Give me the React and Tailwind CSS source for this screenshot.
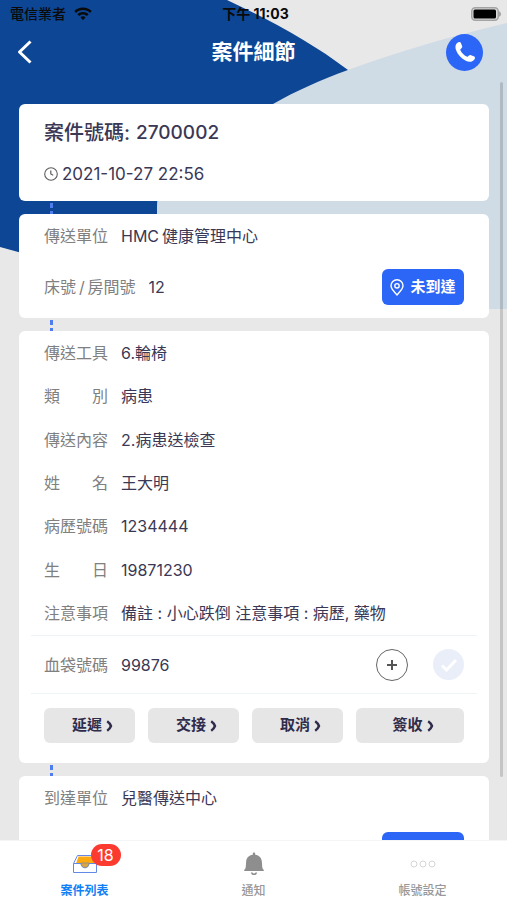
import * as React from 'react';
import clsx from 'clsx';

const DETAILS = [
	{ label: '傳送工具', value: '6.輪椅' },
	{ label: '類別', value: '病患' },
	{ label: '傳送內容', value: '2.病患送檢查' },
	{ label: '姓名', value: '王大明' },
	{ label: '病歷號碼', value: '1234444' },
	{ label: '生日', value: '19871230' },
	{ label: '注意事項', value: '備註 : 小心跌倒 注意事項 : 病歷, 藥物' },
];

const ACTIONS = [
	{ name: '延遲', slug: 'delay' },
	{ name: '交接', slug: 'handover' },
	{ name: '取消', slug: 'cancel' },
	{ name: '簽收', slug: 'sign', wide: true },
];

/**
 * icons
 */
const WifiIcon = () => (
	<svg viewBox='0 0 18 14' className='w-[18px] h-[14px]' fill='currentColor' aria-hidden='true'>
		<path d='M9 0.6C5.6 0.6 2.5 1.9 0.3 4.1L2.1 5.9C3.9 4.1 6.3 3.1 9 3.1s5.1 1 6.9 2.8l1.8-1.8C15.5 1.9 12.4 0.6 9 0.6Z' />
		<path d='M9 4.9c-2.2 0-4.2.9-5.6 2.3l1.8 1.8C6.2 8 7.5 7.4 9 7.4s2.8.6 3.8 1.6l1.8-1.8C13.2 5.8 11.2 4.9 9 4.9Z' />
		<path d='M9 9.200c-1 0-1.900.4-2.500 1L9 13.200l2.500-3c-.6-.6-1.500-1-2.500-1Z' />
	</svg>
);

const BatteryIcon = () => (
	<svg viewBox='0 0 30 14' className='w-[30px] h-[14px]' aria-hidden='true'>
		<rect x='0.75' y='0.75' width='26.5' height='12.5' rx='3.5' fill='#dcdcdc' stroke='#a3a3a3' strokeWidth='1.5' />
		<rect x='2.5' y='2.5' width='22.5' height='9' rx='1.5' fill='#000' />
		<path d='M28 4.200c1.400.6 2 1.500 2 2.800s-.6 2.200-2 2.800Z' fill='#a3a3a3' />
	</svg>
);

const PhoneIcon = () => (
	<svg viewBox='0 0 22 22' className='w-[22px] h-[22px]' fill='#fff' aria-hidden='true'>
		<path d='M2 3.500C2.800 2 4 1 5.300 1c.9 0 1.500.6 1.800 1.400l1 2.700c.3.900 0 1.500-.6 2.100l-.9.900c-.4.400-.4.800-.1 1.400 1.500 2.800 3.500 4.800 6.200 6.100.5.200.9.200 1.300-.2l.9-.8c.6-.5 1.300-.7 2.100-.4l2.700 1c.9.3 1.400 1 1.300 1.900-.2 1.500-1.400 2.700-3.200 3.300-2 .7-4.200.2-6.500-1-4.300-2.200-7.700-5.900-9.300-10.400C1.300 6.700 1.200 5 2 3.500Z' />
	</svg>
);

const ClockIcon = () => (
	<svg viewBox='0 0 14 14' className='w-[14px] h-[14px]' fill='none' stroke='#5c5c5c' aria-hidden='true'>
		<circle cx='7' cy='7' r='6.3' strokeWidth='1.1' />
		<path d='M6.800 3.400V7l2.400 1.300' strokeWidth='1.2' />
	</svg>
);

const PinIcon = () => (
	<svg viewBox='0 0 14 17' className='w-[14px] h-[17px]' fill='none' stroke='currentColor' strokeWidth='1.4' aria-hidden='true'>
		<path d='M7 16C4.200 12.800 1 10 1 6.800a6 6 0 0 1 12 0C13 10 9.800 12.800 7 16Z' strokeLinejoin='round' />
		<circle cx='7' cy='6.8' r='2.2' />
	</svg>
);

const ChevronIcon = () => (
	<svg viewBox='0 0 7 12' className='w-[7px] h-3' fill='none' stroke='currentColor' strokeWidth='2.4' aria-hidden='true'>
		<path d='M1.200 1.300C2.600 2.300 4.400 4.300 5 6 4.400 7.700 2.600 9.700 1.200 10.700' />
	</svg>
);

const InboxIcon = () => (
	<svg viewBox='0 0 24 20' className='w-6 h-5' aria-hidden='true'>
		<path d='M4.500 1.500h15L23.500 9.500V18.500H.5V9.500Z' fill='#fff' stroke='#6488e6' />
		<path d='M5.500 2.500h13.500L21.500 9.500H3Z' fill='#fcaa10' />
		<path d='M.5 9.500H8c.2 2.700 1.700 4.300 4 4.300s3.800-1.600 4-4.300h7.500' fill='none' stroke='#6488e6' />
		<path d='M8 9h8c-.2 2.900-1.700 4.500-4 4.500S8.200 11.900 8 9Z' fill='#dba544' stroke='#7d8597' strokeWidth='0.7' />
	</svg>
);

const BellIcon = () => (
	<svg viewBox='0 0 22 24' className='w-[22px] h-6' fill='#8e8e8e' aria-hidden='true'>
		<path d='M11 .5c.7 0 1.200.5 1.200 1.200v1C16.200 3.200 18.700 6 18.900 9.900l.3 4.600c.1 1.500.6 2.600 1.600 3.500v1H1.200v-1c1-.9 1.500-2 1.600-3.500l.3-4.600C3.300 6 5.800 3.200 9.800 2.700v-1C9.800 1 10.300.5 11 .5Z' />
		<path d='M7.800 20.500h1.700c.3.600.8.900 1.500.9s1.200-.3 1.500-.9h1.700c-.4 1.600-1.500 2.600-3.200 2.600s-2.800-1-3.200-2.600Z' />
	</svg>
);

const MoreIcon = () => (
	<svg viewBox='0 0 26 8' className='w-[26px] h-2' fill='none' stroke='#d6d6d6' aria-hidden='true'>
		<circle cx='4' cy='4' r='3' />
		<circle cx='13' cy='4' r='3' />
		<circle cx='22' cy='4' r='3' />
	</svg>
);

const TABS = [
	{ name: '案件列表', slug: 'cases', icon: InboxIcon, badge: 18, active: true },
	{ name: '通知', slug: 'notices', icon: BellIcon },
	{ name: '帳號設定', slug: 'account', icon: MoreIcon },
];

/**
 * shared parts
 */
const Backdrop = () => (
	<svg
		viewBox='0 0 507 310'
		preserveAspectRatio='none'
		className='absolute inset-x-0 top-0 -z-10 w-full h-[310px]'
		aria-hidden='true'
	>
		<path d='M0 0H227C270 20 311 42 348 70L273 160 157 290 0 247Z' fill='#0d4694' />
		<path d='M507 23C452 36 400 51 348 70 320 80 296 91 273 104 200 135 157 170 157 206V309H507Z' fill='#cfdbe5' />
	</svg>
);

const Card = ({ className, children }) => (
	<section className={clsx('rounded-md bg-white', className)}>{children}</section>
);

const Connector = () => (
	<div className='flex h-[13px] flex-col gap-[3px] pl-[31px] pt-[2px]'>
		<span className='h-[5px] w-[3px] bg-[#4f7df0]'></span>
		<span className='h-[3px] w-[3px] bg-[#4f7df0]'></span>
	</div>
);

// two character labels are spread over the width of four
const Field = ({ label, value }) => (
	<div className='flex items-center gap-[13px]'>
		<dt className='flex min-w-16 justify-between text-[#808080]'>
			{label.length === 2
				? label.split('').map(char => <span key={char}>{char}</span>)
				: label}
		</dt>
		<dd>{value}</dd>
	</div>
);

const ArriveButton = () => (
	<button
		type='button'
		className='flex h-9 w-[82px] items-center justify-center gap-[6px] rounded-md bg-[#2c66f6] text-[15px] font-bold text-white'
	>
		<PinIcon /> 未到達
	</button>
);

const Header = () => (
	<header>
		<div className='grid h-7 grid-cols-3 items-center pl-[10px] pr-[6px] text-sm text-[#0a0a0a]'>
			<div className='flex items-center gap-2 font-medium'>電信業者 <WifiIcon /></div>
			<div className='text-center font-bold'>下午 11:03</div>
			<div className='flex justify-end'><BatteryIcon /></div>
		</div>
		<div className='flex h-12 items-center px-4 text-white'>
			<div className='flex flex-1'>
				<button type='button' aria-label='返回' className='flex h-9 w-5 items-center'>
					<svg viewBox='0 0 16 24' className='w-4 h-6' fill='none' stroke='currentColor' strokeWidth='3' aria-hidden='true'>
						<path d='M14.500 1.500 3.500 12l11 10.500' strokeLinejoin='round' />
					</svg>
				</button>
			</div>
			<h1 className='text-center text-[21px] font-bold'>案件細節</h1>
			<div className='flex flex-1 justify-end'>
				<button
					type='button'
					aria-label='撥打電話'
					className='mr-2 flex h-[37px] w-[37px] items-center justify-center rounded-full bg-[#2c66f6]'
				>
					<PhoneIcon />
				</button>
			</div>
		</div>
	</header>
);

const TabBar = () => (
	<nav className='grid h-[60px] grid-cols-3 border-t border-[#f3f5f7] bg-white text-xs'>
		{TABS.map(({ name, slug, icon: Icon, badge, active }) => (
			<a
				key={slug}
				href={'#' + slug}
				className={clsx(
					'flex flex-col items-center gap-[6px] pt-[10px]',
					active ? 'font-bold text-[#0f80f5]' : 'font-medium text-[#989898]'
				)}
			>
				<span className='relative flex h-[26px] items-center'>
					<Icon />
					{badge &&
						<span className='absolute -top-[7px] left-[18px] flex h-[22px] w-[30px] items-center justify-center rounded-full bg-[#fb3b30] text-base font-normal text-white'>
							{badge}
						</span>
					}
				</span>
				{name}
			</a>
		))}
	</nav>
);

export default function App() {
	return (
		<div className="relative isolate flex h-screen flex-col overflow-hidden bg-[#e8e8e8] font-['Inter','Noto_Sans_CJK_TC',sans-serif] text-base text-[#3a3855]">
			<Backdrop />
			<Header />
			<div className='relative flex min-h-0 flex-1 flex-col'>
				<main className='flex-1 overflow-y-auto pb-5 pl-[19px] pr-[18px] pt-7 [scrollbar-width:none]'>
					<Card className='px-[25px] pb-[14px] pt-[14px]'>
						<h2 className='flex h-[30px] items-center gap-[6px] text-xl font-medium'>
							案件號碼: <span className='text-[19px]'>2700002</span>
						</h2>
						<p className='mt-[13px] flex items-center gap-1 text-[17px] leading-[26px]'>
							<ClockIcon /> <time>2021-10-27 22:56</time>
						</p>
					</Card>
					<Connector />
					<Card className='px-[25px] pb-[13px]'>
						<dl>
							<div className='flex h-11'><Field label='傳送單位' value={'HMC\u2009健康管理中心'} /></div>
							<div className='flex items-center justify-between pt-[11px]'>
								<Field label={'床號\u2009/\u2009房間號'} value='12' />
								<ArriveButton />
							</div>
						</dl>
					</Card>
					<Connector />
					<Card className='px-3 pb-5'>
						<dl className='grid min-h-[304px] auto-rows-fr px-[13px]'>
							{DETAILS.map(item => <Field key={item.label} {...item} />)}
						</dl>
						<div className='flex h-[59px] items-center justify-between border-y border-[#eef3f6] px-[13px]'>
							<dl><Field label='血袋號碼' value='99876' /></dl>
							<div className='flex items-center gap-[25px]'>
								<button
									type='button'
									aria-label='新增血袋'
									className='flex h-8 w-8 items-center justify-center rounded-full border border-[#666]'
								>
									<svg viewBox='0 0 12 12' className='w-3 h-3' stroke='#555' strokeWidth='2' aria-hidden='true'>
										<path d='M6 1v10M1 6h10' />
									</svg>
								</button>
								<button
									type='button'
									aria-label='確認血袋'
									className='flex h-[31px] w-[31px] items-center justify-center rounded-full bg-[#e9eef9]'
								>
									<svg viewBox='0 0 18 14' className='w-[18px] h-[14px]' fill='none' stroke='#fff' strokeWidth='3' aria-hidden='true'>
										<path d='M2 7.500 6.500 12 16 2' />
									</svg>
								</button>
							</div>
						</div>
						<div className='flex gap-[13px] px-[13px] pt-[14px]'>
							{ACTIONS.map(action => (
								<button
									key={action.slug}
									type='button'
									className={clsx(
										'flex h-[35px] items-center justify-center gap-1 rounded-md bg-[#e6e6e6] pl-[6px] text-[15px] font-bold text-[#2f2c4c]',
										action.wide ? 'flex-[6]' : 'flex-[5]'
									)}
								>
									{action.name} <ChevronIcon />
								</button>
							))}
						</div>
					</Card>
					<Connector />
					<Card className='px-[25px] pb-[13px]'>
						<dl className='flex h-11'><Field label='到達單位' value='兒醫傳送中心' /></dl>
						<div className='flex justify-end pt-[12px]'><ArriveButton /></div>
					</Card>
				</main>
				{/* scroll indicator */}
				<div className='absolute right-1 top-[6px] bottom-[63px] w-[3px] rounded-full bg-black/15'></div>
			</div>
			<TabBar />
		</div>
	);
}
